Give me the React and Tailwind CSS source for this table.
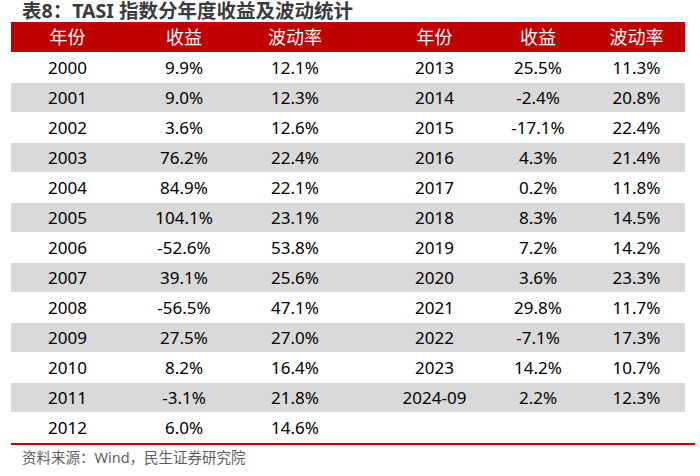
import React from "react";

const left = [
  ["2000", "9.9%", "12.1%"],
  ["2001", "9.0%", "12.3%"],
  ["2002", "3.6%", "12.6%"],
  ["2003", "76.2%", "22.4%"],
  ["2004", "84.9%", "22.1%"],
  ["2005", "104.1%", "23.1%"],
  ["2006", "-52.6%", "53.8%"],
  ["2007", "39.1%", "25.6%"],
  ["2008", "-56.5%", "47.1%"],
  ["2009", "27.5%", "27.0%"],
  ["2010", "8.2%", "16.4%"],
  ["2011", "-3.1%", "21.8%"],
  ["2012", "6.0%", "14.6%"],
];
const right = [
  ["2013", "25.5%", "11.3%"],
  ["2014", "-2.4%", "20.8%"],
  ["2015", "-17.1%", "22.4%"],
  ["2016", "4.3%", "21.4%"],
  ["2017", "0.2%", "11.8%"],
  ["2018", "8.3%", "14.5%"],
  ["2019", "7.2%", "14.2%"],
  ["2020", "3.6%", "23.3%"],
  ["2021", "29.8%", "11.7%"],
  ["2022", "-7.1%", "17.3%"],
  ["2023", "14.2%", "10.7%"],
  ["2024-09", "2.2%", "12.3%"],
  ["", "", ""],
];

const gridCls =
  "grid grid-cols-[113px_120px_102px_39px_99px_108px_89px_4px] h-[30px] items-center";

function Cell({ children }) {
  return <div className="text-center whitespace-nowrap">{children}</div>;
}

export default function App() {
  return (
    <div
      className="w-[700px] h-[476px] bg-white overflow-hidden"
      style={{ fontFamily: '"Noto Sans", "Noto Sans CJK SC", sans-serif' }}
    >
      <div className="h-[22px] pl-[22px] text-[19.5px] leading-[21px] font-bold text-[#3b3b3b] whitespace-nowrap">
        表8：TASI 指数分年度收益及波动统计
      </div>
      <div className="ml-[11px] w-[674px]">
        <div className={`${gridCls} bg-[#c00000] text-white text-[18px]`}>
          <Cell>年份</Cell>
          <Cell>收益</Cell>
          <Cell>波动率</Cell>
          <div />
          <Cell>年份</Cell>
          <Cell>收益</Cell>
          <Cell>波动率</Cell>
          <div />
        </div>
        {left.map((l, i) => {
          const r = right[i];
          const gray = i % 2 === 1;
          return (
            <div
              key={i}
              className={`${gridCls} border-t border-white text-[17px] text-black ${
                gray ? "bg-[#d9d9d9]" : "bg-white"
              }`}
            >
              <Cell>{l[0]}</Cell>
              <Cell>{l[1]}</Cell>
              <Cell>{l[2]}</Cell>
              <div />
              <Cell>{r[0]}</Cell>
              <Cell>{r[1]}</Cell>
              <Cell>{r[2]}</Cell>
              <div />
            </div>
          );
        })}
      </div>
      <div className="ml-[11px] mt-[1px] w-[684px] h-[2px] bg-[#c00000]" />
      <div className="pl-[22px] mt-[2px] text-[14.5px] leading-[20px] text-[#5f5f5f] whitespace-nowrap">
        资料来源：Wind，民生证券研究院
      </div>
    </div>
  );
}
